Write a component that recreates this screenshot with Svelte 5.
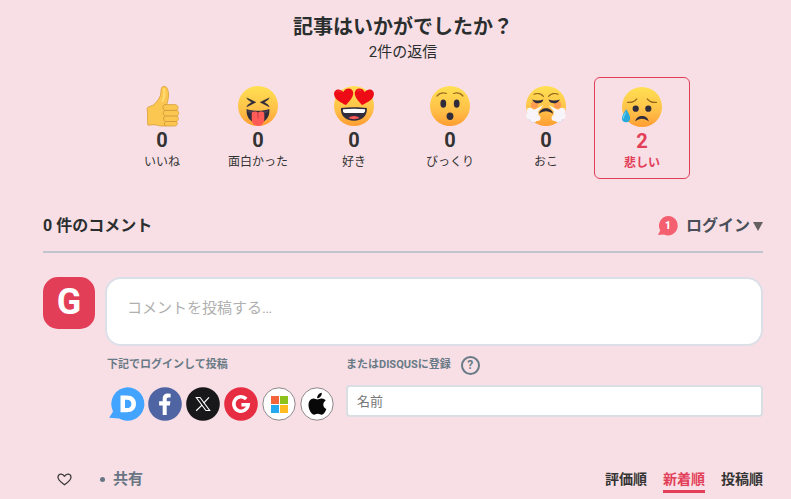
<script>
  const reactions = [
    { id: 'like', label: 'いいね', count: 0 },
    { id: 'funny', label: '面白かった', count: 0 },
    { id: 'love', label: '好き', count: 0 },
    { id: 'wow', label: 'びっくり', count: 0 },
    { id: 'angry', label: 'おこ', count: 0 },
    { id: 'sad', label: '悲しい', count: 2 }
  ];
  const providers = ['Disqus', 'Facebook', 'X', 'Google', 'Microsoft', 'Apple'];
  const sorts = ['評価順', '新着順', '投稿順'];
  let selected = $state('sad');
  let sort = $state('新着順');
  let comment = $state('');
  let name = $state('');
</script>

<svelte:head><title>コメント</title></svelte:head>

<main>
  <section class="poll">
    <h1>記事はいかがでしたか？</h1>
    <p>2件の返信</p>
    <div class="reactions">
      {#each reactions as r}
        <button class="reaction" class:selected={selected === r.id} aria-pressed={selected === r.id} onclick={() => (selected = r.id)}>
          <svg viewBox="0 0 40 40" aria-hidden="true">
            <defs>
              <linearGradient id="skin-{r.id}" x1="0" y1="0" x2="0" y2="1">
                <stop offset="0" stop-color="#ffe052" />
                <stop offset=".6" stop-color="#ffc048" />
                <stop offset="1" stop-color="#ff9d33" />
              </linearGradient>
            </defs>
            {#if r.id === 'like'}
              <path d="M5.200 23.500C5 21.500 6 20.800 8 20.400c4-.8 7-4.600 9.300-8.400C19.500 8.500 18.500 4.500 19.500 2c.8-2 3.500-2.300 5-.6 3 3.500 2.400 10.300.3 17.200h8c3 0 4.400 3.700 2.200 5.800 2.500 1 2.300 4.600 0 5.600 2 1.200 1.700 4.600-.4 5.500 1.500 1.500.7 4.500-2 4.500H20c-3.500 0-6-1.300-8-1.300l-6 .5C5 36 6 31 5.200 23.500z" fill="#fbc751" stroke="#d89e3b" stroke-width=".8" />
              <path d="M24.800 18.600h-2.300c-2 1-2 4.500.3 5.800h12.200M22.800 24.400c-2 1.300-2 4.600.3 5.600H35M23 30c-2 1.200-1.700 4.600.4 5.500h11.200M23.400 35.500c-1.500 1.200-1.300 3.800.5 4.500" fill="none" stroke="#d0963a" stroke-width=".9" />
              <path d="M22 3c1 4 .5 8-1.500 12" fill="none" stroke="#ffdc75" stroke-width="2" stroke-linecap="round" />
            {:else}
              <circle cx="20" cy="20" r="20" fill="url(#skin-{r.id})" />
              {#if r.id === 'funny'}
                <path d="M8.700 11.700l9.300 4.600-9.300 4.600 1-1.900 3.900-2.700-3.900-2.700zM31.300 11.700L22 16.300l9.300 4.600-1-1.900-3.900-2.700 3.900-2.700z" fill="#302c3b" stroke="#302c3b" stroke-width=".3" />
                <path d="M8.700 23c6 2.400 16.600 2.400 22.600 0 1 8-4 14-11.300 14S7.700 31 8.700 23z" fill="#302c3b" />
                <path d="M9.500 24c6.500 2.200 14.500 2.200 21 0l-.2 2.300c-6 2-14.600 2-20.600 0z" fill="#493f50" />
                <path d="M13.700 28c0-3 4.500-3 6.300-1 1.800-2 6.300-2 6.300 1v5.700a6.300 6.300 0 0 1-12.600 0z" fill="#ff5b57" />
                <path d="M20 26.500v6" stroke="#d33f4c" stroke-width="1.200" />
              {:else if r.id === 'love'}
                <path d="M7 22c8-1 18-1 25.800 0 .8 8-4.800 12.700-12.900 12.700S6.200 30 7 22z" fill="#302c3b" />
                <path d="M9 23.200c7-.7 15-.7 22 0 .5 2.500-.5 3.800-2 3.800H11c-1.600 0-2.500-1.300-2-3.800z" fill="#fff" />
                <path d="M14.500 32c2.500-2.800 8.500-2.800 11 0-3 1.500-8 1.500-11 0z" fill="#ff5b5b" />
                <path d="M12 19C7 16.500.5 13.500.1 8.400-.3 3 6 1.600 9.300 6 11.800 1.200 18.500 1.500 19.200 6.500 19.900 11 15 15.500 12 19zM28 19c5-2.500 11.500-5.500 11.900-10.600C40.300 3 34 1.600 30.700 6 28.200 1.200 21.500 1.500 20.800 6.500 20.100 11 25 15.500 28 19z" fill="#ed0c16" />
                <path d="M3 6c1-1.500 3-1.500 4 0M23 5c1-1.500 3-1.500 4 0" fill="none" stroke="#f83232" stroke-width="1" stroke-linecap="round" />
              {:else if r.id === 'wow'}
                <path d="M7 10c2.200-2.500 6-3.600 9.500-2.500M33 10c-2.200-2.500-6-3.600-9.500-2.500" fill="none" stroke="#9d6e22" stroke-width="1.200" stroke-linecap="round" />
                <ellipse cx="13.300" cy="17.700" rx="2.900" ry="4.100" fill="#302c3b" />
                <ellipse cx="26.700" cy="17.700" rx="2.900" ry="4.100" fill="#302c3b" />
                <ellipse cx="20" cy="30.300" rx="3.400" ry="3.700" fill="#302c3b" />
              {:else if r.id === 'angry'}
                <circle cx="8.500" cy="19" r="3.700" fill="#ff7955" opacity=".55" />
                <circle cx="31.500" cy="19" r="3.700" fill="#ff7955" opacity=".55" />
                <path d="M8 8.300c3-1.500 7-.8 9.500 2M32 8.300c-3-1.500-7-.8-9.500 2" fill="none" stroke="#93651d" stroke-width="1.200" stroke-linecap="round" />
                <path d="M6 13.500c3.500 1.400 8 1.500 11.500 0-1.500 5-8.500 5.300-11.500 0zM34 13.500c-3.500 1.400-8 1.500-11.500 0 1.500 5 8.500 5.300 11.500 0z" fill="#302c3b" />
                <path d="M13 27.800c1-7.400 13-7.400 14 0-4-3.400-10-3.400-14 0z" fill="#302c3b" />
                <g fill="#f7f5fa">
                  <path d="M17.500 19L10 28l-4-3zM22.500 19L30 28l4-3z" />
                  <circle cx="4" cy="25" r="3.200" /><circle cx="8" cy="28" r="4.500" /><circle cx="3.500" cy="30" r="3.200" /><circle cx="7.500" cy="33" r="3.500" /><circle cx="11.500" cy="32" r="3" />
                  <circle cx="36" cy="25" r="3.200" /><circle cx="32" cy="28" r="4.500" /><circle cx="36.500" cy="30" r="3.200" /><circle cx="32.500" cy="33" r="3.500" /><circle cx="28.500" cy="32" r="3" />
                </g>
                <path d="M3 33c1 3 4 4 6 3M37 33c-1 3-4 4-6 3" fill="none" stroke="#d8d1df" stroke-width=".8" />
              {:else}
                <path d="M5.500 15.300c3.500.4 7-.7 9.200-3.300M34.500 15.300c-3.500.4-7-.7-9.200-3.300" fill="none" stroke="#93651d" stroke-width="1.200" stroke-linecap="round" />
                <circle cx="13.700" cy="21.700" r="3.100" fill="#302c3b" />
                <circle cx="26.300" cy="21.700" r="3.100" fill="#302c3b" />
                <path d="M13.300 34.500c1-7.300 12.400-7.300 13.400 0-4-3.700-9.400-3.700-13.400 0z" fill="#302c3b" />
                <path d="M4.200 22c1.700 3.300 3.900 6 3.900 9.200a4 4 0 0 1-8.100 0c0-3.200 2.500-5.900 4.200-9.200z" fill="#27a9dc" />
                <path d="M3.500 26c-1.500 2-2 3.500-2 5" fill="none" stroke="#72d4f4" stroke-width="1.200" stroke-linecap="round" />
              {/if}
            {/if}
          </svg>
          <strong>{r.count}</strong>
          <span>{r.label}</span>
        </button>
      {/each}
    </div>
  </section>

  <header>
    <h2>0 件のコメント</h2>
    <button class="login">
      <span class="badge">
        <svg viewBox="0 0 20 20" aria-hidden="true"><path d="M10.500 0a9.500 9.700 0 1 1-4.500 18.400L0 19l2.200-4.500A9.700 9.700 0 0 1 10.500 0z" fill="#f4606f" /></svg>
        <b>1</b>
      </span>
      <span>ログイン</span>
      <svg class="caret" viewBox="0 0 10 9" aria-hidden="true"><path d="M0 0h10L5 9z" fill="#656062" /></svg>
    </button>
  </header>

  <form onsubmit={(e) => e.preventDefault()}>
    <div class="avatar" aria-hidden="true">G</div>
    <div class="fields">
      <textarea aria-label="コメント" placeholder="コメントを投稿する…" rows="1" bind:value={comment}></textarea>
      <div class="auth">
        <div class="social">
          <h3>下記でログインして投稿</h3>
          <div class="providers">
            {#each providers as p}
              <button type="button" aria-label={p}>
                <svg viewBox="0 0 34 34" aria-hidden="true">
                  {#if p === 'Disqus'}
                    <path d="M17.500.2a16.800 16.800 0 1 1-8.400 31.300L-.8 30.700 3 24.500A16.800 16.800 0 0 1 17.500.2z" fill="#42a4ff" />
                    <path fill-rule="evenodd" d="M10.500 8.500H17c5.500 0 9 3.200 9 8.300 0 5.200-3.600 8.500-9.200 8.500h-6.300zm4.500 4.200v8.400h2c2.700 0 4.400-1.600 4.400-4.200s-1.700-4.200-4.400-4.200z" fill="#fff" />
                  {:else if p === 'Facebook'}
                    <circle cx="17" cy="17" r="16.800" fill="#4e64a3" />
                    <path d="M14.700 28V18.400h-3.600v-4.100h3.600v-2.600c0-3.500 2.100-5.200 5.200-5.200l2.700.2v3.700h-2c-1.500 0-1.900.8-1.900 1.900v2h3.700l-.6 4.100h-3.100V28z" fill="#fff" />
                  {:else if p === 'X'}
                    <circle cx="17" cy="17" r="16.800" fill="#181719" />
                    <path d="M10.300 10.500h3.800l9.600 13h-3.800z" fill="none" stroke="#fff" stroke-width="1.100" />
                    <path d="M23 10.300l-5.300 5.900M16 18.100l-5.800 5.700" stroke="#fff" stroke-width="1.200" />
                  {:else if p === 'Google'}
                    <circle cx="17" cy="17" r="16.800" fill="#e62d42" />
                    <path d="M22.200 12A7.200 7.200 0 1 0 24.200 17.700H17.400" fill="none" stroke="#fff" stroke-width="3.500" />
                  {:else if p === 'Microsoft'}
                    <circle cx="17" cy="17" r="16.200" fill="#fff" stroke="#8d868a" />
                    <path d="M9 9h8v8H9z" fill="#f3643b" /><path d="M18 9h8v8h-8z" fill="#8cc21d" />
                    <path d="M9 18h8v8H9z" fill="#25a9ee" /><path d="M18 18h8v8h-8z" fill="#fdbb21" />
                  {:else}
                    <circle cx="17" cy="17" r="16.200" fill="#fff" stroke="#8d868a" />
                    <path d="M17.300 12.400c1.300 0 2.400-1.100 4.400-1 1.800.1 3.100.8 4 2.200-3.500 2.200-3 6.900.6 8.300-.9 2.500-2.500 5.700-4.600 5.800-1.500 0-2-.9-3.900-.9s-2.500.9-4 .9c-2.700-.1-5.300-5.600-5.300-9.600 0-4.100 2.400-6.500 5-6.600 1.700 0 2.800.9 3.800.9zM17.200 11.300c-.3-2.700 2-5.400 4.600-5.600.3 2.800-1.900 5.600-4.600 5.600z" fill="#080808" />
                  {/if}
                </svg>
              </button>
            {/each}
          </div>
        </div>
        <div class="register">
          <div class="register-title">
            <label for="guest-name">またはDISQUSに登録</label>
            <button type="button" class="help" aria-label="ヘルプ">?</button>
          </div>
          <input id="guest-name" type="text" placeholder="名前" bind:value={name} />
        </div>
      </div>
    </div>
  </form>

  <nav>
    <div class="actions">
      <button aria-label="お気に入り">
        <svg viewBox="0 0 16 14" aria-hidden="true"><path d="M8 12.800C4.500 10 1 7.800 1 4.600 1 .7 6 0 8 3.600 10 0 15 .7 15 4.600c0 3.200-3.500 5.400-7 8.200z" fill="none" stroke="#38373a" stroke-width="1.300" stroke-linejoin="round" /></svg>
      </button>
      <button class="share"><i></i>共有</button>
    </div>
    <div class="sorts">
      {#each sorts as s}
        <button class:active={sort === s} aria-pressed={sort === s} onclick={() => (sort = s)}>{s}</button>
      {/each}
    </div>
  </nav>
</main>

<style>
  :global(body) {
    margin: 0;
    background: #f8dfe5;
  }
  main {
    padding: 13px 28px 0 43px;
    font-family: Roboto, "Noto Sans CJK JP", sans-serif;
    color: #2a2e2e;
  }
  button, input, textarea {
    box-sizing: border-box;
    font: inherit;
    color: inherit;
  }
  button {
    border: 0;
    padding: 0;
    background: none;
    cursor: pointer;
  }
  svg {
    display: block;
    overflow: visible;
  }
  h1, h2, h3, p {
    margin: 0;
  }
  .poll {
    text-align: center;
  }
  h1 {
    font-size: 20px;
    line-height: 28px;
    font-weight: 700;
  }
  p {
    font-size: 15px;
    line-height: 22px;
  }
  .reactions {
    display: flex;
    justify-content: center;
    margin-top: 14px;
    padding-right: 2px;
  }
  .reaction {
    display: flex;
    flex-direction: column;
    align-items: center;
    width: 96px;
    height: 102px;
    padding-top: 8px;
    border: 1px solid transparent;
    border-radius: 6px;
    color: #333;
  }
  .reaction svg {
    width: 40px;
    height: 40px;
  }
  .reaction strong {
    font-size: 20px;
    line-height: 28px;
    font-weight: 700;
  }
  .reaction span {
    font-size: 12px;
    line-height: 16px;
  }
  .reaction.selected {
    padding-top: 9px;
    border-color: #e33e58;
    color: #e33e58;
  }
  .selected span {
    font-weight: 700;
  }
  header {
    display: flex;
    justify-content: space-between;
    align-items: center;
    margin-top: 28px;
    padding-bottom: 6px;
    border-bottom: 2px solid #c2c4cd;
  }
  h2 {
    font-size: 16px;
    line-height: 38px;
    font-weight: 700;
  }
  .login {
    display: flex;
    align-items: center;
    font-size: 16px;
    font-weight: 700;
    line-height: 24px;
    color: #494e58;
  }
  .badge {
    display: grid;
    place-items: center;
    width: 20px;
    height: 20px;
    margin-right: 8px;
  }
  .badge > * {
    grid-area: 1 / 1;
  }
  .badge svg {
    width: 20px;
    height: 20px;
  }
  .badge b {
    z-index: 1;
    font-size: 10px;
    line-height: 20px;
    color: #fff;
  }
  .caret {
    width: 10px;
    height: 9px;
    margin-left: 3px;
  }
  form {
    display: flex;
    align-items: flex-start;
    gap: 10px;
    margin-top: 24px;
  }
  .avatar {
    flex: none;
    width: 52px;
    height: 52px;
    border-radius: 15px;
    background: #e33e58;
    color: #fff;
    font-size: 36px;
    line-height: 50px;
    font-weight: 700;
    text-align: center;
  }
  .fields {
    flex: 1;
    min-width: 0;
  }
  textarea {
    display: block;
    width: 100%;
    height: 69px;
    padding: 18px 20px;
    border: 2px solid #dbdfe7;
    border-radius: 16px;
    background: #fff;
    font-size: 15px;
    line-height: 22px;
    resize: none;
  }
  textarea::placeholder {
    color: #b0b0b0;
  }
  .auth {
    display: flex;
    gap: 12px;
    margin-top: 9px;
  }
  .social {
    flex: none;
    padding-left: 2px;
  }
  h3, .register-title {
    font-size: 11px;
    line-height: 20px;
    font-weight: 700;
    color: #687a86;
  }
  .providers {
    display: flex;
    gap: 4px;
    margin-top: 12px;
    padding-left: 3px;
  }
  .providers button, .providers svg {
    width: 34px;
    height: 34px;
  }
  .register {
    flex: 1;
    min-width: 0;
  }
  .register-title {
    display: flex;
    align-items: center;
    gap: 10px;
    height: 20px;
  }
  .help {
    width: 19px;
    height: 19px;
    border: 2px solid #687a86;
    border-radius: 50%;
    font-size: 12px;
    line-height: 15px;
  }
  input {
    display: block;
    width: 100%;
    height: 32px;
    margin-top: 10px;
    padding: 0 9px;
    border: 2px solid #d9dee3;
    border-radius: 4px;
    background: #fff;
    font-size: 13px;
  }
  input::placeholder {
    color: #777;
  }
  nav {
    display: flex;
    justify-content: space-between;
    align-items: flex-start;
    margin-top: 47px;
    padding-bottom: 6px;
    font-weight: 700;
    line-height: 22px;
  }
  .actions, .sorts, .share {
    display: flex;
    align-items: center;
  }
  .actions {
    gap: 28px;
    padding-left: 14px;
  }
  .actions svg {
    width: 15px;
    height: 13px;
  }
  .share {
    gap: 8px;
    font-size: 15px;
    color: #687684;
  }
  .share i {
    width: 5px;
    height: 5px;
    border-radius: 50%;
    background: currentColor;
  }
  .sorts {
    gap: 16px;
    font-size: 14px;
    color: #333;
  }
  .sorts button {
    border-bottom: 3px solid transparent;
  }
  .sorts .active {
    color: #e33e58;
    border-color: #e33e58;
  }
</style>
